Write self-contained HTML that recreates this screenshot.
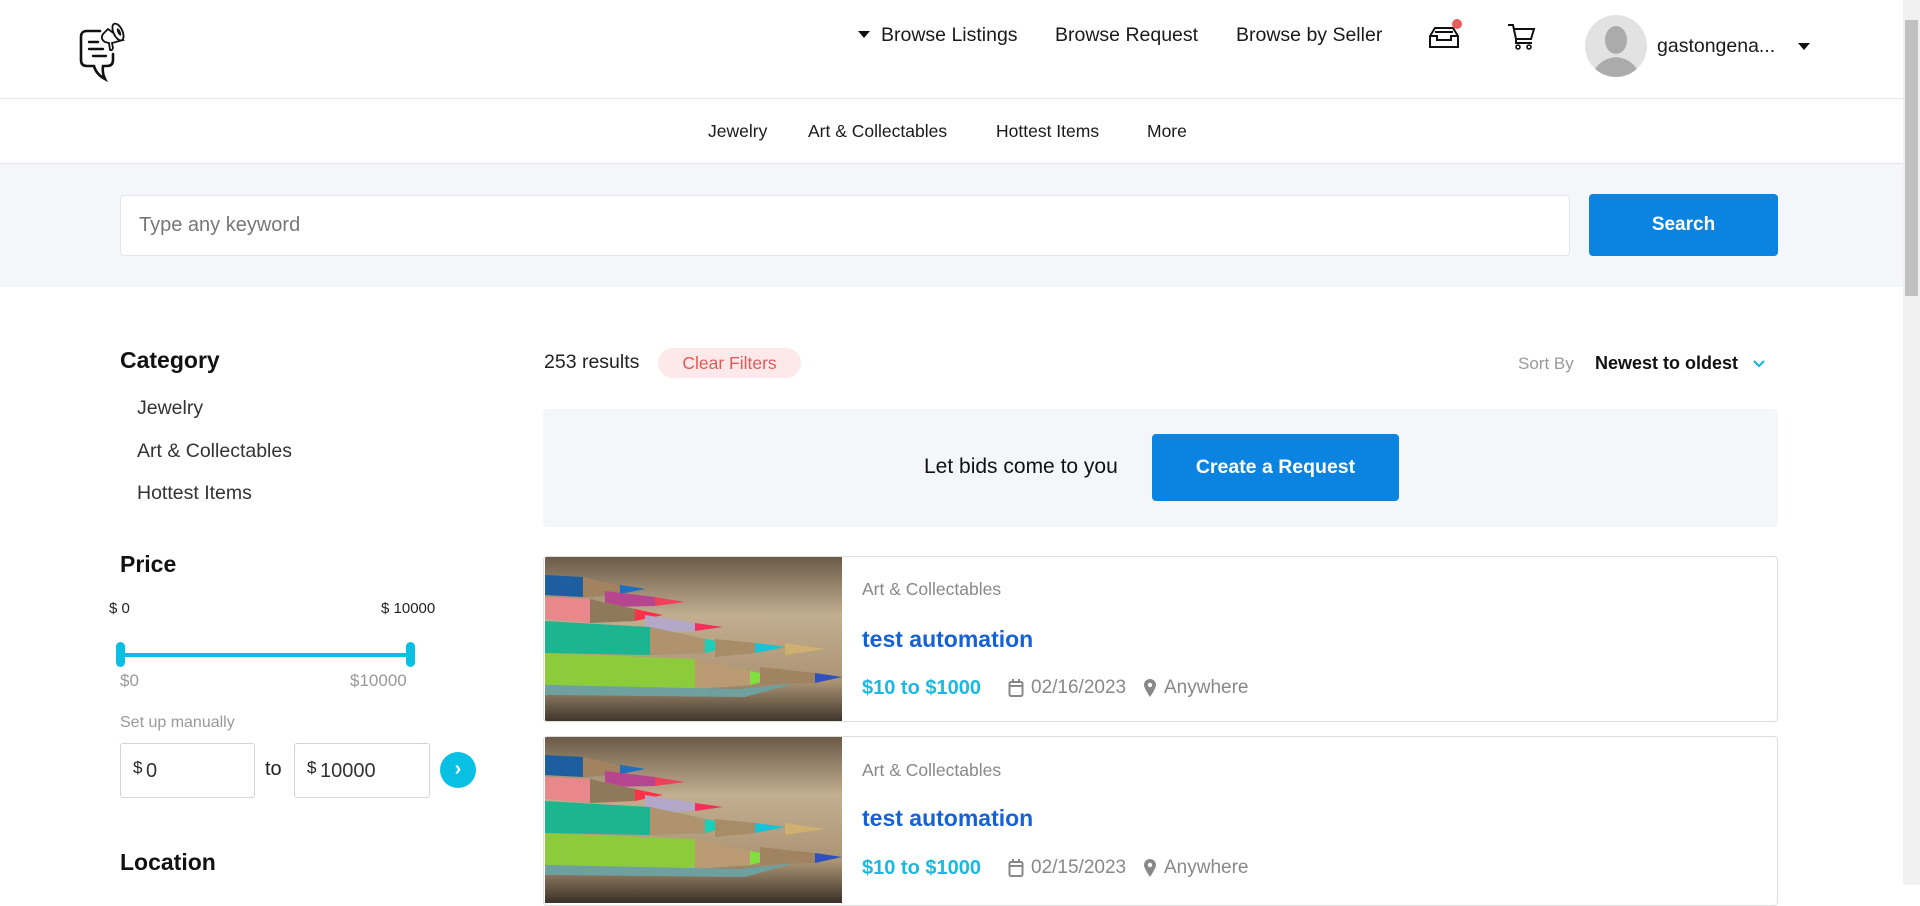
<!DOCTYPE html>
<html><head><meta charset="utf-8"><style>
*{margin:0;padding:0;box-sizing:border-box}
body{width:1920px;height:885px;overflow:hidden;background:#fff;font-family:"Liberation Sans",sans-serif;color:#222;position:relative}
.a{position:absolute;white-space:nowrap}
.nav{font-size:19.5px;color:#1a1a1a}
.sub{font-size:17.5px;color:#1a1a1a}
.side{font-size:19.5px;color:#333}
.h{font-size:23px;font-weight:bold;color:#111}
.card{position:absolute;left:543px;width:1235px;height:166px;border:1px solid #ddd;border-radius:4px;overflow:hidden;background:#fff}
.card .img{position:absolute;left:1px;top:0;width:297px;height:166px}
.cat{font-size:17.5px;color:#888}
.tt{font-size:23px;font-weight:bold;color:#1561d6}
.pr{font-size:20px;font-weight:bold;color:#1ab9e2}
.gr{font-size:19px;color:#888}
</style></head><body>
<svg class="a" style="left:76px;top:18px" width="62" height="64" viewBox="0 0 62 64">
<path d="M24 13H11Q5 13 5 19V42Q5 48 11 48H18Q20 56 29 61Q26 55 27 48H31Q37 48 37 42V36" fill="none" stroke="#111" stroke-width="2.6" stroke-linecap="round"/>
<path d="M13 24H22M13 31H27M17 38H30" stroke="#111" stroke-width="2.4" stroke-linecap="round"/>
<path d="M32 11L27 16Q24 21 29 24L33 25L34 32Q36 33 37 30L36 25L47 22Z" fill="#fff" stroke="#111" stroke-width="1.8"/>
<ellipse cx="42" cy="14" rx="4.5" ry="9" fill="#fff" stroke="#111" stroke-width="1.8" transform="rotate(-25 42 14)"/>
<ellipse cx="43" cy="14" rx="1.6" ry="4" fill="#111" transform="rotate(-25 43 14)"/>
</svg>
<div class="a" style="left:858px;top:31px;width:0;height:0;border-left:6px solid transparent;border-right:6px solid transparent;border-top:7px solid #111"></div>
<div class="a nav" style="left:881px;top:24px">Browse Listings</div>
<div class="a nav" style="left:1055px;top:24px">Browse Request</div>
<div class="a nav" style="left:1236px;top:24px">Browse by Seller</div>
<svg class="a" style="left:1427px;top:22px" width="34" height="28" viewBox="0 0 34 28">
<path d="M3 14L8 6H26L31 14V25H3Z M3 14H10V18H24V14H31 M8 10H26" fill="none" stroke="#111" stroke-width="2"/>
</svg>
<div class="a" style="left:1452px;top:19px;width:10px;height:10px;border-radius:50%;background:#e85c5c"></div>
<svg class="a" style="left:1507px;top:23px" width="30" height="28" viewBox="0 0 30 28">
<path d="M1 2H6L9 16H24L27 6H7" fill="none" stroke="#111" stroke-width="2"/>
<path d="M9 16L9 20H25" fill="none" stroke="#111" stroke-width="2"/>
<circle cx="11" cy="24" r="2" fill="none" stroke="#111" stroke-width="1.6"/><circle cx="22" cy="24" r="2" fill="none" stroke="#111" stroke-width="1.6"/>
</svg>
<div class="a" style="left:1585px;top:15px;width:62px;height:62px;border-radius:50%;background:#e2e2e2;overflow:hidden">
<svg width="62" height="62" viewBox="0 0 62 62"><ellipse cx="31" cy="25" rx="11" ry="14" fill="#ababab"/><path d="M8 58Q14 44 31 42Q48 44 54 58Q31 66 8 58Z" fill="#ababab"/></svg></div>
<div class="a nav" style="left:1657px;top:35px">gastongena...</div>
<div class="a" style="left:1798px;top:43px;width:0;height:0;border-left:6px solid transparent;border-right:6px solid transparent;border-top:7px solid #111"></div>
<div class="a" style="left:0;top:98px;width:1903px;height:1px;background:#e6e6e6"></div>
<div class="a sub" style="left:708px;top:121px">Jewelry</div>
<div class="a sub" style="left:808px;top:121px">Art &amp; Collectables</div>
<div class="a sub" style="left:996px;top:121px">Hottest Items</div>
<div class="a sub" style="left:1147px;top:121px">More</div>
<div class="a" style="left:0;top:163px;width:1903px;height:124px;background:#f4f6f9;border-top:1px solid #e4e4e4"></div>
<div class="a" style="left:120px;top:195px;width:1450px;height:61px;background:#fff;border:1px solid #e2e5ea;border-radius:4px"></div>
<div class="a" style="left:139px;top:214px;font-size:20px;color:#777">Type any keyword</div>
<div class="a" style="left:1589px;top:194px;width:189px;height:62px;background:#0a84e0;border-radius:4px;color:#fff;font-weight:bold;font-size:19px;text-align:center;line-height:62px">Search</div>
<div class="a" style="left:1903px;top:0;width:17px;height:885px;background:#f1f1f1"></div>
<div class="a" style="left:1905px;top:20px;width:13px;height:276px;background:#c1c1c1"></div>
<div class="a h" style="left:120px;top:347px">Category</div>
<div class="a side" style="left:137px;top:397px">Jewelry</div>
<div class="a side" style="left:137px;top:440px">Art &amp; Collectables</div>
<div class="a side" style="left:137px;top:482px">Hottest Items</div>
<div class="a h" style="left:120px;top:551px">Price</div>
<div class="a" style="left:109px;top:600px;font-size:15px">$ 0</div>
<div class="a" style="left:381px;top:600px;font-size:15px">$ 10000</div>
<div class="a" style="left:120px;top:653px;width:290px;height:4px;background:#08c0e4"></div>
<div class="a" style="left:116px;top:642px;width:9px;height:25px;border-radius:5px;background:#08c0e4"></div>
<div class="a" style="left:406px;top:642px;width:9px;height:25px;border-radius:5px;background:#08c0e4"></div>
<div class="a" style="left:120px;top:671px;font-size:17px;color:#999">$0</div>
<div class="a" style="left:350px;top:671px;font-size:17px;color:#999">$10000</div>
<div class="a" style="left:120px;top:714px;font-size:16px;color:#999">Set up manually</div>
<div class="a" style="left:120px;top:743px;width:135px;height:55px;border:1px solid #cfd5dc;border-radius:3px"></div>
<div class="a" style="left:133px;top:758px;font-size:17px">$</div>
<div class="a" style="left:146px;top:760px;font-size:20px;color:#333">0</div>
<div class="a" style="left:265px;top:758px;font-size:20px">to</div>
<div class="a" style="left:294px;top:743px;width:136px;height:55px;border:1px solid #cfd5dc;border-radius:3px"></div>
<div class="a" style="left:307px;top:758px;font-size:17px">$</div>
<div class="a" style="left:320px;top:760px;font-size:20px;color:#333">10000</div>
<div class="a" style="left:440px;top:752px;width:36px;height:36px;border-radius:50%;background:#08c0e4;color:#fff;font-weight:bold;text-align:center;line-height:34px;font-size:20px">›</div>
<div class="a h" style="left:120px;top:849px">Location</div>
<div class="a" style="left:544px;top:351px;font-size:19.5px">253 results</div>
<div class="a" style="left:658px;top:348px;width:143px;height:30px;border-radius:15px;background:#fde9e9;color:#de5b5b;font-size:17.5px;text-align:center;line-height:30px">Clear Filters</div>
<div class="a" style="left:1518px;top:354px;font-size:17px;color:#999">Sort By</div>
<div class="a" style="left:1595px;top:353px;font-size:18px;font-weight:bold;color:#111">Newest to oldest</div>
<svg class="a" style="left:1752px;top:359px" width="14" height="10" viewBox="0 0 14 10"><path d="M2 2L7 7L12 2" fill="none" stroke="#1ab9e2" stroke-width="2.2"/></svg>
<div class="a" style="left:543px;top:409px;width:1235px;height:118px;background:#f4f6f9;border-radius:4px"></div>
<div class="a" style="left:924px;top:455px;font-size:21px;color:#111">Let bids come to you</div>
<div class="a" style="left:1152px;top:434px;width:247px;height:67px;background:#0a84e0;border-radius:4px;color:#fff;font-weight:bold;font-size:19.5px;text-align:center;line-height:67px">Create a Request</div>

<div class="card" style="top:556px">
<svg class="img" viewBox="0 0 297 166" preserveAspectRatio="none">
<defs><linearGradient id="bg" x1="0" y1="0" x2="0" y2="1"><stop offset="0" stop-color="#6a5a48"/><stop offset=".35" stop-color="#c2ae90"/><stop offset=".75" stop-color="#ab9474"/><stop offset="1" stop-color="#3a3028"/></linearGradient></defs>
<rect width="297" height="166" fill="url(#bg)"/>
<g id="p">
<polygon points="0,18 38,20 75,28 100,32 75,37 38,40 0,38" fill="#1c5ea0"/><polygon points="38,20 75,28 75,37 38,40" fill="#a3835f"/><polygon points="75,28 100,32 75,37" fill="#1e6fc0"/>
<polygon points="60,34 110,40 130,45 110,49 60,50" fill="#b64590"/><polygon points="110,40 140,45 110,49" fill="#f0415a"/>
<polygon points="0,40 45,42 90,52 118,58 90,64 45,66 0,62" fill="#e8888a"/><polygon points="45,42 90,52 90,64 45,66" fill="#8e7a5a"/><polygon points="90,52 118,58 90,64" fill="#ff3048"/>
<polygon points="100,58 150,66 175,70 150,74 100,76" fill="#b4a8c8"/><polygon points="150,66 178,70 150,74" fill="#f0305a"/>
<polygon points="0,64 105,70 160,82 190,88 160,96 105,98 0,96" fill="#1db590"/><polygon points="105,70 160,82 160,96 105,98" fill="#b0926e"/><polygon points="160,82 190,88 160,96" fill="#18d0b8"/>
<polygon points="170,82 210,86 240,90 210,96 170,100" fill="#a88c68"/><polygon points="210,86 240,90 210,96" fill="#15c4d8"/><polygon points="240,86 280,92 240,98" fill="#cfb070"/>
<polygon points="0,96 150,102 205,114 235,120 205,128 150,132 0,128" fill="#8ccc3c"/><polygon points="150,102 205,114 205,128 150,132" fill="#ba9a72"/><polygon points="205,114 235,120 205,128" fill="#80e040"/>
<polygon points="215,110 270,116 297,120 270,126 215,128" fill="#a08462"/><polygon points="270,116 297,120 270,126" fill="#3050c0"/>
<polygon points="0,128 195,132 250,126 200,140 0,138" fill="#6ea0a0"/>
</g>
</svg>
<div class="a cat" style="left:318px;top:22px">Art &amp; Collectables</div>
<div class="a tt" style="left:318px;top:69px">test automation</div>
<div class="a pr" style="left:318px;top:120px">$10 to $1000</div>
<svg class="a" style="left:464px;top:121px" width="16" height="20" viewBox="0 0 16 20"><rect x="1.5" y="4" width="13" height="14" rx="1.5" fill="none" stroke="#888" stroke-width="2"/><path d="M2 8H14M5 1V5M11 1V5" stroke="#888" stroke-width="2"/></svg>
<div class="a gr" style="left:487px;top:120px">02/16/2023</div>
<svg class="a" style="left:599px;top:121px" width="14" height="20" viewBox="0 0 14 20"><path d="M7 19Q1 10 1 7A6 6 0 0 1 13 7Q13 10 7 19Z" fill="#888"/><circle cx="7" cy="7" r="2.2" fill="#fff"/></svg>
<div class="a gr" style="left:620px;top:120px">Anywhere</div>
</div>

<div class="card" style="top:736px;height:170px">
<svg class="img" viewBox="0 0 297 166" preserveAspectRatio="none">
<rect width="297" height="166" fill="url(#bg)"/>
<use href="#p"/>
</svg>
<div class="a cat" style="left:318px;top:23px">Art &amp; Collectables</div>
<div class="a tt" style="left:318px;top:68px">test automation</div>
<div class="a pr" style="left:318px;top:120px">$10 to $1000</div>
<svg class="a" style="left:464px;top:121px" width="16" height="20" viewBox="0 0 16 20"><rect x="1.5" y="4" width="13" height="14" rx="1.5" fill="none" stroke="#888" stroke-width="2"/><path d="M2 8H14M5 1V5M11 1V5" stroke="#888" stroke-width="2"/></svg>
<div class="a gr" style="left:487px;top:120px">02/15/2023</div>
<svg class="a" style="left:599px;top:121px" width="14" height="20" viewBox="0 0 14 20"><path d="M7 19Q1 10 1 7A6 6 0 0 1 13 7Q13 10 7 19Z" fill="#888"/><circle cx="7" cy="7" r="2.2" fill="#fff"/></svg>
<div class="a gr" style="left:620px;top:120px">Anywhere</div>
</div>
</body></html>
